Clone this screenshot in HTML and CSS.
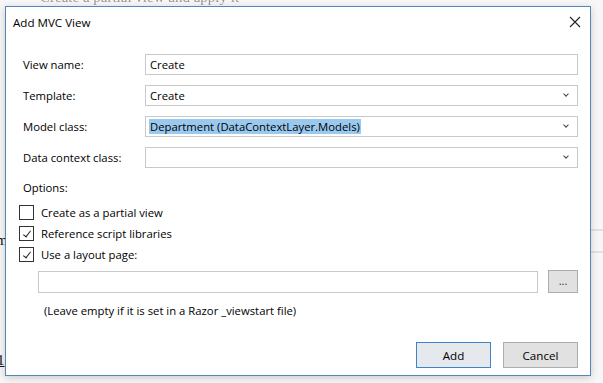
FILE: index.html
```html
<!DOCTYPE html>
<html lang="en">
<head>
    <meta charset="UTF-8">
    <title>Add MVC View</title>
    <link rel="stylesheet" href="styles.css">
</head>
<body>
    <!-- page behind the dialog -->
    <div class="backdrop">
        <span class="bg-text bg-top">Create a partial view and apply it</span>
        <span class="bg-text bg-m">m</span>
        <span class="bg-text bg-one">1</span>
        <span class="bg-line bg-line-1"></span>
        <span class="bg-line bg-line-2"></span>
    </div>

    <div class="dialog">
        <div class="titlebar">
            <span class="title">Add MVC View</span>
            <svg class="close" width="12" height="12" viewBox="0 0 12 12">
                <path d="M1 1L11 11M11 1L1 11" stroke="#222" stroke-width="1.1" fill="none"></path>
            </svg>
        </div>

        <div class="form">
            <div class="row">
                <label class="label">View name:</label>
                <div class="field"><span>Create</span></div>
            </div>
            <div class="row">
                <label class="label">Template:</label>
                <div class="field select"><span>Create</span><i class="chev"></i></div>
            </div>
            <div class="row">
                <label class="label">Model class:</label>
                <div class="field select"><span class="selected">Department (DataContextLayer.Models)</span><i class="chev"></i></div>
            </div>
            <div class="row">
                <label class="label">Data context class:</label>
                <div class="field select"><span></span><i class="chev"></i></div>
            </div>

            <div class="options-title">Options:</div>

            <div class="checks">
                <div class="check"><span class="box"></span>Create as a partial view</div>
                <div class="check"><span class="box checked"></span>Reference script libraries</div>
                <div class="check"><span class="box checked"></span>Use a layout page:</div>
            </div>

            <div class="layout-row">
                <div class="field layout-input"></div>
                <button class="btn btn-browse">...</button>
            </div>
            <p class="hint">(Leave empty if it is set in a Razor _viewstart file)</p>
        </div>

        <div class="footer">
            <button class="btn btn-default">Add</button>
            <button class="btn">Cancel</button>
        </div>
    </div>
</body>
</html>
```

FILE: styles.css
```css
* {
    box-sizing: border-box;
    margin: 0;
    padding: 0;
}

body {
    font-family: 'Open Sans', 'Noto Sans', sans-serif;
    font-size: 11.3px;
    color: #000;
    background: #f7f7f7;
    width: 603px;
    height: 383px;
    overflow: hidden;
    position: relative;
    padding: 6px 0 0 5px;
}

.backdrop {
    position: absolute;
    inset: 0;
}

.bg-text {
    position: absolute;
    font-family: 'Liberation Serif', serif;
    font-size: 15px;
    color: #111;
}

.bg-top {
    top: -11px;
    left: 40px;
    color: #999;
    filter: blur(0.6px);
}

.bg-m {
    top: 232px;
    left: -4px;
}

.bg-one {
    top: 352px;
    left: -3px;
    text-decoration: underline;
}

.bg-line {
    position: absolute;
    left: 591px;
    width: 12px;
    height: 2px;
    background: #e2e2e2;
}

.bg-line-1 { top: 229px; }
.bg-line-2 { top: 251px; }

.dialog {
    position: relative;
    width: 586px;
    height: 370px;
    background: #fff;
    border: 1px solid #5685bb;
    box-shadow: 0 2px 8px rgba(0, 0, 0, 0.18);
    display: flex;
    flex-direction: column;
}

.titlebar {
    height: 30px;
    display: flex;
    align-items: center;
    justify-content: space-between;
    padding: 0 9px 0 7px;
}

.title {
    font-size: 11.6px;
}

.close {
    display: block;
}

.form {
    padding: 17px 12px 0 17px;
    display: flex;
    flex-direction: column;
}

.row {
    display: flex;
    align-items: center;
    height: 21px;
    margin-bottom: 10px;
}

.label {
    width: 122px;
    flex: none;
}

.field {
    flex: 1;
    height: 21px;
    border: 1px solid #c9c9c9;
    display: flex;
    align-items: center;
    padding: 0 4px;
    background: #fff;
}

.select {
    justify-content: space-between;
    padding-right: 9px;
}

.selected {
    background: #99c9ef;
    padding: 0 1px;
    margin-left: -1px;
}

.chev {
    width: 4px;
    height: 4px;
    border-right: 1.3px solid #444;
    border-bottom: 1.3px solid #444;
    transform: rotate(45deg);
    margin-top: -3px;
}

.options-title {
    margin-top: 1px;
    line-height: 18px;
}

.checks {
    margin-left: -4px;
    margin-top: 7px;
    display: flex;
    flex-direction: column;
    gap: 5px;
}

.check {
    display: flex;
    align-items: center;
    height: 16px;
    gap: 7px;
}

.box {
    width: 15px;
    height: 15px;
    border: 1px solid #333;
    position: relative;
    background: #fff;
}

.box.checked::after {
    content: '';
    position: absolute;
    left: 5px;
    top: 2px;
    width: 3px;
    height: 7px;
    border-right: 1.6px solid #222;
    border-bottom: 1.6px solid #222;
    transform: rotate(38deg);
}

.layout-row {
    display: flex;
    align-items: center;
    gap: 10px;
    margin: 8px 0 0 15px;
}

.layout-input {
    height: 22px;
}

.btn {
    font-family: inherit;
    font-size: 11.6px;
    color: #000;
    background: #e1e1e1;
    border: 1px solid #adadad;
    width: 75px;
    height: 26px;
}

.btn-browse {
    width: 30px;
    height: 23px;
    font-size: 11px;
    color: #333;
    padding-bottom: 3px;
}

.btn-default {
    border-color: #3f84c4;
    background: #e5e8ec;
}

.hint {
    margin: 8px 0 0 21px;
    line-height: 20px;
}

.footer {
    display: flex;
    justify-content: flex-end;
    gap: 12px;
    padding: 0 12px 0 0;
    margin-top: 21px;
}
```
